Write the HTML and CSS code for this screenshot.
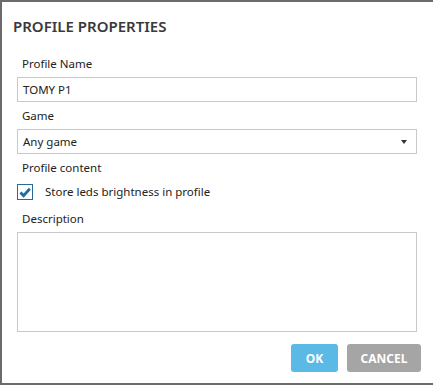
FILE: index.html
```html
<!DOCTYPE html>
<html lang="en">
<head>
  <meta charset="UTF-8" />
  <title>Profile Properties</title>
  <link rel="stylesheet" href="styles.css">
</head>
<body>
  <div class="dialog">
    <h1>PROFILE PROPERTIES</h1>

    <div class="form">
      <label class="field-label">Profile Name</label>
      <div class="box input-box">TOMY P1</div>

      <label class="field-label">Game</label>
      <div class="box select-box">
        <span>Any game</span>
        <span class="arrow"></span>
      </div>

      <label class="field-label">Profile content</label>
      <div class="check-row">
        <span class="checkbox">
          <svg width="12" height="11" viewBox="0 0 12 11"><path d="M1.4 5.4 L4.6 8.6 L10.8 1.8" fill="none" stroke="#1b6fa3" stroke-width="2.8"/></svg>
        </span>
        <span>Store leds brightness in profile</span>
      </div>

      <label class="field-label">Description</label>
      <div class="box text-box"></div>
    </div>

    <div class="actions">
      <button class="btn btn-ok">OK</button>
      <button class="btn btn-cancel">CANCEL</button>
    </div>
  </div>
</body>
</html>
```

FILE: styles.css
```css
body {
  margin: 0;
  background: #fff;
  font-family: 'Noto Sans', 'Open Sans', sans-serif;
  color: #222;
}

.dialog {
  width: 433px;
  height: 385px;
  box-sizing: border-box;
  border-left: 2px solid #6b6b6b;
  border-top: 2px solid #6b6b6b;
  border-bottom: 2px solid #6b6b6b;
  padding: 14px 16px 0 15px;
  display: flex;
  flex-direction: column;
}

h1 {
  margin: 0 0 0 -4px;
  font-size: 15px;
  font-weight: 600;
  color: #3a3a3a;
  line-height: 20px;
}

.form {
  display: flex;
  flex-direction: column;
  margin-top: 20px;
}

.field-label {
  font-size: 11.5px;
  line-height: 16px;
  padding-left: 5px;
  margin-bottom: 5px;
}

.box {
  border: 1px solid #c9c9c9;
  box-sizing: border-box;
  font-size: 11.5px;
  padding-left: 5px;
  margin-bottom: 6px;
}

.input-box, .select-box {
  height: 25px;
  line-height: 23px;
}

.select-box {
  display: flex;
  justify-content: space-between;
  align-items: center;
  padding-right: 9px;
}

.arrow {
  width: 0;
  height: 0;
  border-left: 3px solid transparent;
  border-right: 3px solid transparent;
  border-top: 4px solid #333;
}

.check-row {
  display: flex;
  align-items: center;
  gap: 12px;
  font-size: 11.5px;
  line-height: 16px;
  margin-top: 3px;
  margin-bottom: 11px;
}

.checkbox {
  width: 16px;
  height: 16px;
  box-sizing: border-box;
  border: 1px solid #2a6a92;
  display: flex;
  align-items: center;
  justify-content: center;
}

.text-box {
  height: 100px;
  margin-bottom: 0;
}

.actions {
  display: flex;
  justify-content: flex-end;
  gap: 9px;
  margin-top: 12px;
  margin-right: -4px;
}

.btn {
  border: none;
  border-radius: 3px;
  color: #fff;
  font-family: 'Noto Sans', sans-serif;
  font-size: 12px;
  font-weight: 700;
  height: 28px;
  padding: 0;
}

.btn-ok {
  background: #5bb9e6;
  width: 47px;
}

.btn-cancel {
  background: #a5a5a5;
  width: 74px;
}
```
